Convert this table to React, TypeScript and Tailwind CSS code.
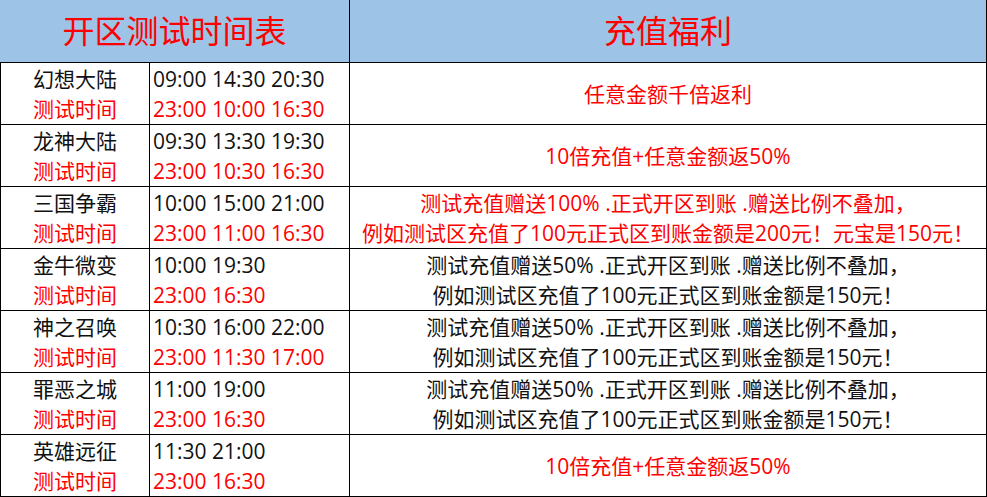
import React from "react";

type Row = {
  name: string;
  t1: string;
  t2: string;
  benefit: string[];
  red: boolean;
};

const rows: Row[] = [
  { name: "幻想大陆", t1: "09:00 14:30 20:30", t2: "23:00 10:00 16:30", benefit: ["任意金额千倍返利"], red: true },
  { name: "龙神大陆", t1: "09:30 13:30 19:30", t2: "23:00 10:30 16:30", benefit: ["10倍充值+任意金额返50%"], red: true },
  {
    name: "三国争霸",
    t1: "10:00 15:00 21:00",
    t2: "23:00 11:00 16:30",
    benefit: ["测试充值赠送100% .正式开区到账 .赠送比例不叠加，", "例如测试区充值了100元正式区到账金额是200元！元宝是150元！"],
    red: true,
  },
  {
    name: "金牛微变",
    t1: "10:00 19:30",
    t2: "23:00 16:30",
    benefit: ["测试充值赠送50% .正式开区到账 .赠送比例不叠加，", "例如测试区充值了100元正式区到账金额是150元！"],
    red: false,
  },
  {
    name: "神之召唤",
    t1: "10:30 16:00 22:00",
    t2: "23:00 11:30 17:00",
    benefit: ["测试充值赠送50% .正式开区到账 .赠送比例不叠加，", "例如测试区充值了100元正式区到账金额是150元！"],
    red: false,
  },
  {
    name: "罪恶之城",
    t1: "11:00 19:00",
    t2: "23:00 16:30",
    benefit: ["测试充值赠送50% .正式开区到账 .赠送比例不叠加，", "例如测试区充值了100元正式区到账金额是150元！"],
    red: false,
  },
  { name: "英雄远征", t1: "11:30 21:00", t2: "23:00 16:30", benefit: ["10倍充值+任意金额返50%"], red: true },
];

const font = { fontFamily: '"Open Sans", "Noto Sans CJK SC", sans-serif' };

export default function App() {
  return (
    <div className="w-[987px] h-[497px] bg-white overflow-hidden" style={font}>
      <div className="flex h-[63px] bg-[#9dc3e6] border-b border-black">
        <div className="w-[350px] border-r border-black flex items-center justify-center text-[32px] text-[#ff0000] leading-none">
          开区测试时间表
        </div>
        <div className="w-[637px] border-r border-black flex items-center justify-center text-[32px] text-[#ff0000] leading-none">
          充值福利
        </div>
      </div>
      {rows.map((r, i) => (
        <div key={i} className="flex h-[62px] border-b border-black text-[21px] leading-[30px]">
          <div className="w-[150px] border-l border-r border-black flex flex-col items-center justify-center">
            <div className="text-[#111]">{r.name}</div>
            <div className="text-[#ff0000]">测试时间</div>
          </div>
          <div className="w-[200px] border-r border-black flex flex-col justify-center pl-[3px] whitespace-nowrap">
            <div className="text-[#111]">{r.t1}</div>
            <div className="text-[#ff0000]">{r.t2}</div>
          </div>
          <div
            className={
              "w-[637px] border-r border-black flex flex-col items-center justify-center whitespace-nowrap text-[21px] " +
              (r.red ? "text-[#ff0000]" : "text-[#111]")
            }
          >
            {r.benefit.map((b, j) => (
              <div key={j}>{b}</div>
            ))}
          </div>
        </div>
      ))}
    </div>
  );
}
